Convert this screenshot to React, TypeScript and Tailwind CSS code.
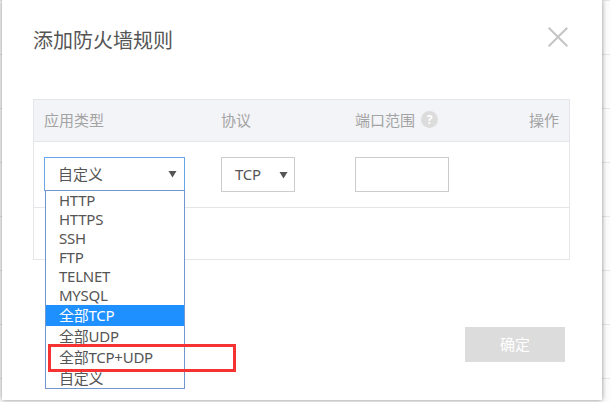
import React from 'react';

const fontStack = { fontFamily: '"Noto Sans", "Noto Sans CJK SC", sans-serif' };

const options = [
  { label: 'HTTP', cjk: false },
  { label: 'HTTPS', cjk: false },
  { label: 'SSH', cjk: false },
  { label: 'FTP', cjk: false },
  { label: 'TELNET', cjk: false },
  { label: 'MYSQL', cjk: false },
  { label: '全部TCP', cjk: true },
  { label: '全部UDP', cjk: true },
  { label: '全部TCP+UDP', cjk: true },
  { label: '自定义', cjk: true },
];
const stripeRows = [0, 1, 2, 3, 4, 5, 6, 7];

const Caret = () => (
  <svg width="9" height="8" viewBox="0 0 9 8" className="block">
    <path d="M0.5 1 H8.5 L4.5 7.5 Z" fill="#555" />
  </svg>
);

const App = () => {
  return (
    <div className="relative w-[610px] h-[402px] overflow-hidden bg-white flex" style={fontStack}>
      {/* Page behind the dialog */}
      <div className="absolute inset-0 flex flex-col bg-[#fcfcfd]">
        <div className="h-[20px] bg-[#eef3f9]"></div>
        {stripeRows.map((row) => (
          <div key={row} className="h-[54px] shrink-0 border-t border-[#e4e6ea]"></div>
        ))}
      </div>

      {/* Dialog */}
      <div className="relative ml-[2px] w-[600px] h-[400px] bg-white shadow-[0_0_5px_rgba(0,0,0,0.45)] pl-[31px] pr-[32px]">
        <div className="h-[99px] pt-[26px] relative">
          <h1 className="text-[20px] leading-[30px] font-normal text-[#555]">添加防火墙规则</h1>
          <svg width="20" height="20" viewBox="0 0 20 20" className="absolute right-[2px] top-[27px]">
            <path d="M0.7 0.7 L19.3 19.3 M19.3 0.7 L0.7 19.3" stroke="#c4c4c4" strokeWidth="2" fill="none" />
          </svg>
        </div>

        {/* Rule table */}
        <div className="w-[537px] h-[161px] border border-[#e4e6ea] flex flex-col">
          <div className="h-[42px] shrink-0 bg-[#f3f4f8] border-b border-[#e4e6ea] flex items-center text-[15px] text-[#a3a3a3]">
            <div className="w-[187px] pl-[10px]">应用类型</div>
            <div className="w-[134px]">协议</div>
            <div className="w-[174px] flex items-center gap-[6px]">
              端口范围
              <span className="w-[17px] h-[17px] mb-[3px] rounded-full bg-[#dcdcdc] text-white text-[12px] font-bold leading-[17px] text-center">?</span>
            </div>
            <div>操作</div>
          </div>
          <div className="h-[66px] shrink-0 border-b border-[#e4e6ea] flex pt-[15px] text-[15px] text-[#555]">
            <div className="w-[187px] pl-[10px]">
              <div className="w-[141px] h-[34px] border border-[#66a6e8] flex items-center justify-between pl-[13px] pr-[7px]">
                <span>自定义</span>
                <Caret />
              </div>
            </div>
            <div className="w-[134px]">
              <div className="w-[74px] h-[35px] border border-[#cccccc] flex items-center justify-between pl-[13px] pr-[6px]">
                <span className="tracking-[-0.2px]">TCP</span>
                <Caret />
              </div>
            </div>
            <div className="w-[94px] h-[35px] border border-[#cccccc] bg-white"></div>
          </div>
        </div>

        <div className="flex justify-end mt-[67px] mr-[5px]">
          <button className="w-[100px] h-[35px] bg-[#dcdcdc] text-white text-[15px]">确定</button>
        </div>
      </div>

      {/* Open select list */}
      <ul className="absolute left-[45px] top-[190px] w-[140px] h-[199px] border border-[#7297cf] bg-white text-[15px] text-[#555] tracking-[-0.25px]">
        {options.map((option) => (
          <li
            key={option.label}
            className={
              (option.cjk ? 'h-[21px] leading-[20px] pl-[13px]' : 'h-[19px] leading-[19px] pl-[13px]') +
              (option.label === '全部TCP' ? ' bg-[#1e90ff] text-white' : '')
            }
          >
            {option.label}
          </li>
        ))}
      </ul>

      {/* Red annotation box */}
      <div className="absolute left-[48px] top-[344px] w-[188px] h-[28px] border-[3px] border-[#f53333]"></div>
    </div>
  );
};

export default App;
